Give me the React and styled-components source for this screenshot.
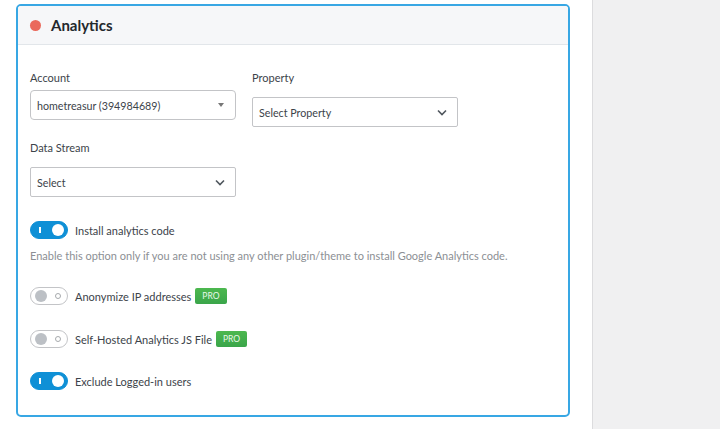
import React from "react";
import styled, { createGlobalStyle } from "styled-components";

const GlobalStyle = createGlobalStyle`
  html, body {
    margin: 0;
    padding: 0;
    background: #fff;
  }
  body {
    font-family: Lato, "Open Sans", sans-serif;
    color: #3c434a;
  }
`;

const Page = styled.div`
  display: flex;
  width: 720px;
  height: 429px;
  overflow: hidden;
`;

const Main = styled.div`
  width: 592px;
  padding: 4px 22px 0 16px;
  box-sizing: border-box;
`;

const Sidebar = styled.div`
  flex: 1;
  background: #f0f0f1;
  border-left: 1px solid #dcdcde;
`;

const Card = styled.div`
  border: 2px solid #38a7e4;
  border-radius: 5px;
  background: #fff;
  overflow: hidden;
`;

const Header = styled.div`
  display: flex;
  align-items: center;
  gap: 10px;
  height: 38px;
  padding: 0 12px;
  background: #f6f7f9;
  border-bottom: 1px solid #e2e6ea;
`;

const Dot = styled.span`
  width: 11px;
  height: 11px;
  border-radius: 50%;
  background: #ea6a5c;
`;

const Title = styled.h2`
  margin: 0;
  font-size: 15px;
  font-weight: 700;
  color: #23282d;
`;

const Body = styled.div`
  padding: 25px 12px 25px 12px;
`;

const FieldRow = styled.div`
  display: flex;
  gap: 16px;
  margin-bottom: 13px;
`;

const Field = styled.div`
  display: flex;
  flex-direction: column;
  width: 206px;
`;

const Label = styled.label`
  font-size: 11px;
  color: #3c434a;
  margin-bottom: ${(p) => p.$gap || 7}px;
  line-height: 16px;
`;

const Select = styled.div`
  display: flex;
  align-items: center;
  justify-content: space-between;
  height: 30px;
  box-sizing: border-box;
  padding: 0 10px 0 6px;
  border: 1px solid #c3c4c7;
  border-radius: ${(p) => (p.$round ? 4 : 2)}px;
  font-size: 10.7px;
  color: #3c434a;
`;

const Caret = styled.span`
  width: 0;
  height: 0;
  border-left: 3px solid transparent;
  border-right: 3px solid transparent;
  border-top: 4px solid #777;
  margin-right: 1px;
`;

const Chevron = () => (
  <svg width="10" height="7" viewBox="0 0 10 7">
    <path d="M1 1.5l4 4 4-4" fill="none" stroke="#50575e" strokeWidth="1.6" />
  </svg>
);

const ToggleRow = styled.div`
  display: flex;
  align-items: center;
  gap: 7px;
  margin-top: ${(p) => p.$mt || 0}px;
  font-size: 11px;
  color: #3c434a;
`;

const Switch = styled.span`
  position: relative;
  width: 38px;
  height: 18px;
  box-sizing: border-box;
  border-radius: 9px;
  background: ${(p) => (p.$on ? "#0f90d6" : "#fff")};
  border: 1px solid ${(p) => (p.$on ? "#0f90d6" : "#c3c4c7")};
  flex-shrink: 0;
`;

const Knob = styled.span`
  position: absolute;
  top: 2px;
  left: ${(p) => (p.$on ? 21 : 4)}px;
  width: 12px;
  height: 12px;
  border-radius: 50%;
  background: ${(p) => (p.$on ? "#fff" : "#bcc0c5")};
`;

const OnMark = styled.span`
  position: absolute;
  top: 5px;
  left: 8px;
  width: 2px;
  height: 6px;
  background: #fff;
`;

const OffMark = styled.span`
  position: absolute;
  top: 5px;
  right: 6px;
  width: 4px;
  height: 4px;
  border-radius: 50%;
  border: 1px solid #a7aaad;
`;

const Help = styled.p`
  margin: 9px 0 0;
  font-size: 11px;
  line-height: 16px;
  color: #8c8f94;
`;

const Pro = styled.span`
  display: inline-flex;
  align-items: center;
  justify-content: center;
  height: 16px;
  padding: 0 7px;
  margin-left: -3px;
  background: linear-gradient(#4cb84f, #3aa54a);
  color: #e8f8e8;
  font-size: 8.5px;
  border-radius: 2px;
`;

const Toggle = ({ on, children, pro, mt }) => (
  <ToggleRow $mt={mt}>
    <Switch $on={on}>
      {on ? <OnMark /> : <OffMark />}
      <Knob $on={on} />
    </Switch>
    <span>{children}</span>
    {pro && <Pro>PRO</Pro>}
  </ToggleRow>
);

export default function App() {
  return (
    <Page>
      <GlobalStyle />
      <Main>
        <Card>
          <Header>
            <Dot />
            <Title>Analytics</Title>
          </Header>
          <Body>
            <FieldRow>
              <Field>
                <Label $gap={4}>Account</Label>
                <Select $round>
                  hometreasur (394984689)
                  <Caret />
                </Select>
              </Field>
              <Field>
                <Label $gap={11}>Property</Label>
                <Select>
                  Select Property
                  <Chevron />
                </Select>
              </Field>
            </FieldRow>
            <Field>
              <Label $gap={11}>Data Stream</Label>
              <Select>
                Select
                <Chevron />
              </Select>
            </Field>
            <Toggle on mt={24}>Install analytics code</Toggle>
            <Help>
              Enable this option only if you are not using any other plugin/theme to install
              Google Analytics code.
            </Help>
            <Toggle mt={23} pro>Anonymize IP addresses</Toggle>
            <Toggle mt={25} pro>Self-Hosted Analytics JS File</Toggle>
            <Toggle on mt={24}>Exclude Logged-in users</Toggle>
          </Body>
        </Card>
      </Main>
      <Sidebar />
    </Page>
  );
}
